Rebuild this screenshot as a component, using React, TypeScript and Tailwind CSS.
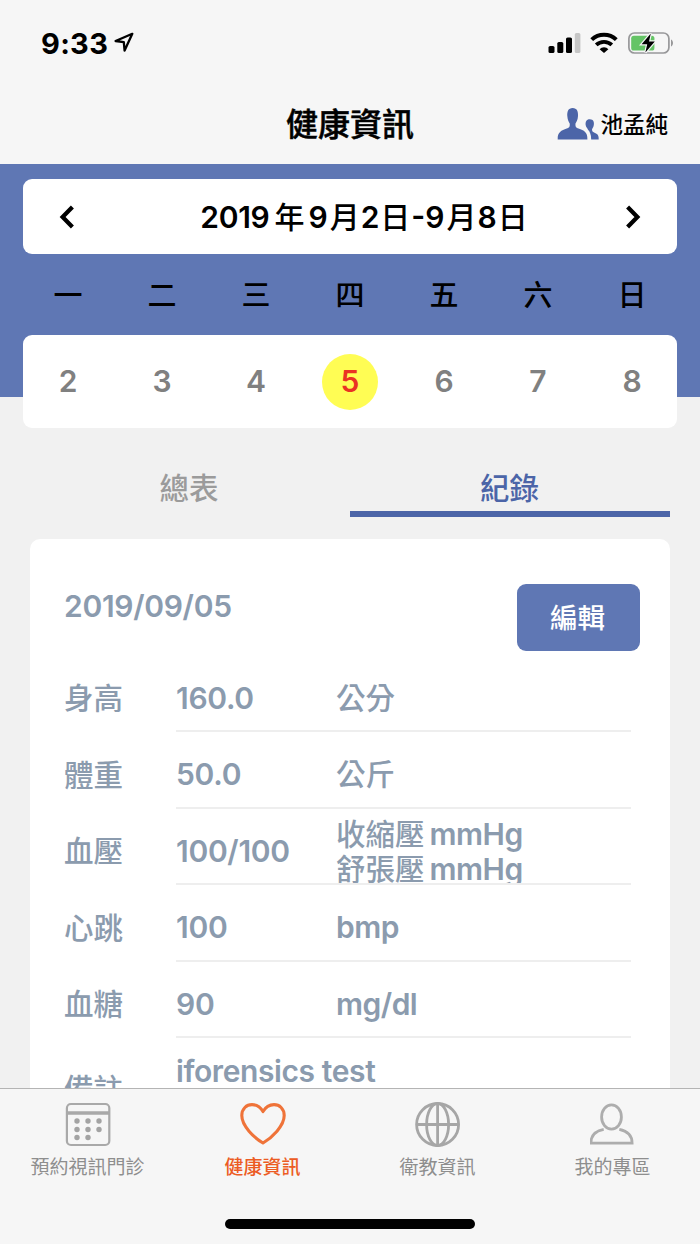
import { useState } from "react";
import type { ReactNode } from "react";

const WEEKDAYS = ["一", "二", "三", "四", "五", "六", "日"];
const DAYS = [2, 3, 4, 5, 6, 7, 8];

const RECORDS = [
  { label: "身高", value: "160.0", units: [{ zh: "公分" }] },
  { label: "體重", value: "50.0", units: [{ zh: "公斤" }] },
  {
    label: "血壓",
    value: "100/100",
    units: [
      { zh: "收縮壓", en: "mmHg" },
      { zh: "舒張壓", en: "mmHg" },
    ],
  },
  { label: "心跳", value: "100", units: [{ en: "bmp" }] },
  { label: "血糖", value: "90", units: [{ en: "mg/dl" }] },
] as { label: string; value: string; units: { zh?: string; en?: string }[] }[];

function StatusBar() {
  return (
    <div className="flex h-[84px] items-start justify-between pr-[26px] pl-[41px]">
      <div className="flex items-start pt-[28px]">
        <span className="pt-px text-[29px] leading-[30px] font-bold tracking-[0.3px]">9:33</span>
        <svg width="20" height="20" viewBox="0 0 20 20" className="mt-[4px] ml-[6px]" fill="none">
          <path
            d="M18.3 1.8 L1.6 9 L9.8 10.2 L10.6 18.6 Z"
            stroke="#000"
            strokeWidth="2.3"
            strokeLinejoin="round"
          />
        </svg>
      </div>
      <div className="flex items-center pt-[32px]">
        <svg width="33" height="22" viewBox="0 0 33 22">
          <rect x="0.5" y="14" width="6" height="7" rx="1.6" />
          <rect x="9.3" y="10" width="6" height="11" rx="1.6" />
          <rect x="18" y="5.5" width="6" height="15.5" rx="1.6" />
          <rect x="26.8" y="1" width="5.6" height="20" rx="1.6" fill="#c6c6c6" />
        </svg>
        <svg width="28" height="22" viewBox="0 0 28 22" className="ml-[9px]" fill="none">
          <path d="M1.7 7.6 A17.8 17.8 0 0 1 26.3 7.6" stroke="#000" strokeWidth="4" />
          <path d="M6.2 12.9 A11.4 11.4 0 0 1 21.8 12.9" stroke="#000" strokeWidth="3.8" />
          <path d="M14 21 L9.6 17.2 A6 6 0 0 1 18.4 17.2 Z" fill="#000" />
        </svg>
        <svg width="46" height="22" viewBox="0 0 46 22" className="ml-[10px]">
          <rect x="0.9" y="1" width="40" height="20" rx="5.5" fill="none" stroke="#98989a" strokeWidth="1.7" />
          <path d="M43 7.5 C45.7 8.6 45.7 13.4 43 14.5 Z" fill="#98989a" />
          <rect x="3.2" y="3.7" width="23.2" height="14.8" rx="2.6" fill="#65c466" />
          <path
            d="M22.8 1.6 L13.6 12.2 H19.2 L17.4 20.4 L26.8 9.4 H21 Z"
            fill="#000"
            stroke="#f6f6f6"
            strokeWidth="2.4"
            paintOrder="stroke"
          />
        </svg>
      </div>
    </div>
  );
}

function FamilyIcon() {
  return (
    <svg width="42" height="34" viewBox="0 0 42 34" fill="#4c65a8">
      <path d="M15.6 1 C20 1 21.3 4.6 21 9 C20.8 13 19.3 15 18.5 16.6 C18.2 20 19 20.6 21.5 21.6 C27 23.6 30.6 25 30.4 32.5 H0.7 C0.4 25 4.5 23.6 9.7 21.6 C12.3 20.6 13 20 12.7 16.6 C11.9 15 10.6 13 10.3 9 C10 4.6 11.3 1 15.6 1 Z" />
      <path d="M32.8 12.2 C36.5 12.2 37.3 15 36.8 18 C36.4 20.6 35.2 21.4 35 22.6 C35 24.8 36 25.2 38 26 C41 27.2 41.8 28.8 41.7 32.5 H34.2 C34.2 27.5 32.8 24.7 31 22.8 C30.8 21.2 28.9 20.6 28.6 17.8 C28.4 14.8 29.2 12.2 32.8 12.2 Z" />
    </svg>
  );
}

function Chevron({ flip = false }: { flip?: boolean }) {
  return (
    <svg width="16" height="24" viewBox="0 0 16 24" fill="none" className={flip ? "rotate-180" : ""}>
      <path d="M13.4 2 L3.6 12 L13.4 22" stroke="#000" strokeWidth="4.2" />
    </svg>
  );
}

function CalendarIcon() {
  const dots = [
    [12, 19], [23, 19], [34, 19],
    [12, 27.5], [23, 27.5], [34, 27.5],
    [12, 35.5], [23, 35.5],
  ];
  return (
    <svg width="46" height="46" viewBox="0 0 46 46" fill="none" stroke="#a9a9a9">
      <rect x="1.9" y="2" width="42.4" height="41" rx="4" strokeWidth="2.2" />
      <path d="M2 11 H44" strokeWidth="3.4" />
      {dots.map(([cx, cy]) => (
        <circle key={`${cx}-${cy}`} cx={cx} cy={cy} r="2.7" fill="#a3a3a3" stroke="none" />
      ))}
    </svg>
  );
}

function HeartIcon() {
  return (
    <svg width="46" height="46" viewBox="0 0 46 46" fill="none">
      <path
        d="M23 41 C14 35.6 1.8 24 1.8 13.6 C1.8 6.6 6.6 2.6 12 2.6 C17 2.6 20.6 5.4 23 9.6 C25.4 5.4 29 2.6 34 2.6 C39.4 2.6 44.2 6.6 44.2 13.6 C44.2 24 32 35.6 23 41 Z"
        stroke="#ef7339"
        strokeWidth="3.1"
        strokeLinejoin="round"
      />
    </svg>
  );
}

function GlobeIcon() {
  return (
    <svg width="46" height="46" viewBox="0 0 46 46" fill="none" stroke="#a6a6a6" strokeWidth="2.8">
      <circle cx="22.6" cy="22.5" r="21" />
      <ellipse cx="22.6" cy="22.5" rx="11" ry="21" />
      <path d="M22.6 1.5 V43.5 M1.6 22.5 H43.6" />
    </svg>
  );
}

function UserIcon() {
  return (
    <svg width="46" height="46" viewBox="0 0 46 46" fill="none" stroke="#adadad" strokeWidth="2.8">
      <ellipse cx="21.5" cy="15" rx="9.9" ry="12.2" />
      <path d="M13.7 27.4 C6.1 28.8 0.9 33.2 0.9 41.2 H42.1 C42.1 33.2 36.5 28.8 29.3 27.4" />
    </svg>
  );
}

const NAV_ITEMS: { label: string; icon: ReactNode }[] = [
  { label: "預約視訊門診", icon: <CalendarIcon /> },
  { label: "健康資訊", icon: <HeartIcon /> },
  { label: "衛教資訊", icon: <GlobeIcon /> },
  { label: "我的專區", icon: <UserIcon /> },
];

export default function App() {
  const [day, setDay] = useState(5);

  return (
    <div className="flex h-[1244px] w-[700px] flex-col overflow-hidden bg-[#f1f1f1] font-['Inter','Noto_Sans_CJK_TC',sans-serif] text-black">
      <header className="h-[164px] shrink-0 bg-[#f6f6f6]">
        <StatusBar />
        <div className="grid h-[80px] grid-cols-3 items-center">
          <span />
          <h1 className="pt-px text-center text-[32px] leading-[40px] font-medium whitespace-nowrap [-webkit-text-stroke:0.5px_black]">
            健康資訊
          </h1>
          <div className="flex items-center justify-end pr-[31px]">
            <FamilyIcon />
            <span className="ml-px mr-px pt-px text-[22.5px] leading-[30px] font-medium">池孟純</span>
          </div>
        </div>
      </header>

      <section className="h-[233px] shrink-0 bg-[#5f77b4] px-[23px] pt-[15px]">
        <div className="flex h-[75px] items-center justify-between rounded-[9px] bg-white px-[36px]">
          <button type="button" aria-label="上一週">
            <Chevron />
          </button>
          <div className="flex items-baseline pl-[28px] text-[30px] leading-[36px] font-medium whitespace-nowrap">
            <span className="font-semibold tracking-[-0.3px]">2019</span>
            <span className="ml-[5px]">年</span>
            <span className="ml-[4px] font-semibold">9</span>
            <span className="ml-[2px]">月</span>
            <span className="ml-[1px] font-semibold">2</span>
            <span className="ml-[1px]">日</span>
            <span className="ml-[1px] font-semibold">-9</span>
            <span className="ml-[2px]">月</span>
            <span className="ml-[1px] font-semibold">8</span>
            <span className="ml-[1px]">日</span>
          </div>
          <button type="button" aria-label="下一週">
            <Chevron flip />
          </button>
        </div>
        <div className="-mx-[2px] grid h-[81px] grid-cols-7 items-center pt-[3px] text-center text-[29px] font-medium">
          {WEEKDAYS.map((name) => (
            <span key={name}>{name}</span>
          ))}
        </div>
        <div className="h-[93px] rounded-[9px] bg-white">
          <div className="-mx-[2px] grid h-full grid-cols-7 place-items-center">
            {DAYS.map((n) => (
              <button
                key={n}
                type="button"
                onClick={() => setDay(n)}
                className={`size-[56px] rounded-full text-[30px] font-semibold ${
                  n === day ? "bg-[#fffd54] text-[#ea3323]" : "text-[#808080]"
                }`}
              >
                {n}
              </button>
            ))}
          </div>
        </div>
      </section>

      <div className="mx-[30px] mt-[61px] grid h-[59px] shrink-0 grid-cols-2 items-start text-center text-[29.5px] leading-[46px] font-medium">
        <button type="button" className="h-[59px] border-b-[6px] border-transparent pt-[6px] pr-[2px] text-[#9b9b9b]">
          總表
        </button>
        <button type="button" className="h-[59px] border-b-[6px] border-[#4c65a8] pt-[6px] pr-px text-[#4c65a8]">
          紀錄
        </button>
      </div>

      <main className="mx-[30px] mt-[22px] min-h-0 flex-1 overflow-hidden rounded-t-[10px] bg-white px-[35px] text-[30px] font-medium text-[#8b9bae]">
        <div className="flex h-[116.5px] justify-between pt-[45px]">
          <span className="ml-[-1px] leading-[44px] font-semibold tracking-[-0.3px]">2019/09/05</span>
          <button
            type="button"
            className="mr-[-5px] h-[67px] w-[123px] rounded-[9px] bg-[#5f77b4] pt-[2px] pr-[2px] text-[27.5px] text-white"
          >
            編輯
          </button>
        </div>
        {RECORDS.map((row) => (
          <div key={row.label} className="flex h-[76.5px] items-end">
            <span className="ml-[-1px] w-[112px] text-[29.5px] leading-[68px]">{row.label}</span>
            <div className="flex h-[70px] w-[455px] items-center border-b-2 border-[#eeeeee]">
              <span className="w-[160px] pt-[4px] font-semibold tracking-[-0.3px]">{row.value}</span>
              <div
                className={
                  row.units.length > 1 ? "h-[68px] overflow-hidden pt-[2px] leading-[35px]" : "pt-[4px]"
                }
              >
                {row.units.map((unit) => (
                  <div key={unit.zh ?? unit.en} className="flex items-baseline">
                    {unit.zh && <span className="mr-[5px] text-[29.5px]">{unit.zh}</span>}
                    {unit.en && <span className="font-semibold tracking-[-0.5px]">{unit.en}</span>}
                  </div>
                ))}
              </div>
            </div>
          </div>
        ))}
        <div className="flex">
          <span className="ml-[-1px] w-[112px] pt-[29px] text-[29.5px] leading-[44px]">備註</span>
          <span className="pt-[11px] leading-[44px] font-semibold tracking-[-0.4px]">iforensics test</span>
        </div>
      </main>

      <footer className="flex h-[156px] shrink-0 flex-col items-center border-t border-[#b4b4b4] bg-[#f6f6f6]">
        <nav className="grid h-[130px] w-full grid-cols-4 pt-[13px]">
          {NAV_ITEMS.map((item) => (
            <a
              key={item.label}
              className={`flex flex-col items-center text-[19px] leading-[24px] ${
                item.label === "健康資訊" ? "font-medium text-[#ec5c24]" : "text-[#8e8e8e]"
              }`}
            >
              {item.icon}
              <span className="mt-[8px]">{item.label}</span>
            </a>
          ))}
        </nav>
        <div className="h-[10px] w-[250px] rounded-full bg-black" />
      </footer>
    </div>
  );
}
